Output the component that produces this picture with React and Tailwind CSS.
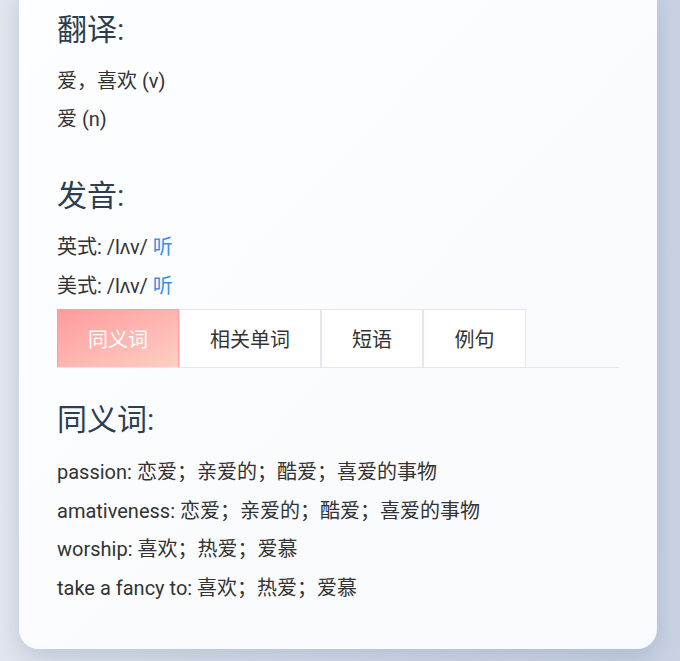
import React, { useState } from 'react';

const cn = '"Roboto", "Noto Sans CJK SC", sans-serif';

const tabs = [
  { id: 'syn', label: '同义词', w: 'w-[122px]' },
  { id: 'rel', label: '相关单词', w: 'w-[142px]' },
  { id: 'phr', label: '短语', w: 'w-[102px]' },
  { id: 'ex', label: '例句', w: 'w-[103px]' },
];

const synonyms = [
  ['passion', '恋爱；亲爱的；酷爱；喜爱的事物'],
  ['amativeness', '恋爱；亲爱的；酷爱；喜爱的事物'],
  ['worship', '喜欢；热爱；爱慕'],
  ['take a fancy to', '喜欢；热爱；爱慕'],
];

const App = () => {
  const [active, setActive] = useState('syn');

  return (
    <div
      className="min-h-screen overflow-hidden bg-linear-to-r from-[#e2e7ef] to-[#c9d3e3] pl-[19px] pr-[23px] pb-[13px]"
      style={{ fontFamily: cn }}
    >
      <div className="-mt-[20px] rounded-[20px] bg-linear-to-br from-[#fdfeff] to-[#f8f9fc] px-[38px] pt-[32px] pb-[42px] shadow-[0_10px_25px_rgba(90,110,150,0.25)]">
        {/* Translation */}
        <h2 className="text-[30px] leading-[36px] text-[#2c3e50]">翻译:</h2>
        <div className="mt-[14px] text-[20px] leading-[38px] text-[#333]">
          <p>爱，喜欢 (v)</p>
          <p>爱 (n)</p>
        </div>

        {/* Pronunciation */}
        <h2 className="mt-[40px] text-[30px] leading-[36px] text-[#2c3e50]">发音:</h2>
        <div className="mt-[14px] text-[20px] leading-[38.5px] text-[#333]">
          <p>
            英式: /lʌv/ <span className="cursor-pointer text-[#3a8ee6]">听</span>
          </p>
          <p>
            美式: /lʌv/ <span className="cursor-pointer text-[#3a8ee6]">听</span>
          </p>
        </div>

        {/* Tabs */}
        <div className="mt-[4px] flex border-b border-[#e4e7ed]">
          {tabs.map(t => (
            <button
              key={t.id}
              onClick={() => setActive(t.id)}
              className={`${t.w} h-[58px] border border-b-0 pt-[2px] text-[20px] ${
                active === t.id
                  ? 'border-[#ff9ea2] bg-linear-to-br from-[#ff9a9e] to-[#fbcfc3] text-white'
                  : 'border-[#e4e7ed] bg-white text-[#333]'
              }`}
            >
              {t.label}
            </button>
          ))}
        </div>

        {/* Synonyms */}
        <h2 className="mt-[34px] text-[30px] leading-[36px] text-[#2c3e50]">同义词:</h2>
        <div className="mt-[15px] text-[20px] leading-[38.5px] text-[#333]">
          {synonyms.map(([en, zh]) => (
            <p key={en}>
              {en}: {zh}
            </p>
          ))}
        </div>
      </div>
    </div>
  );
};

export default App;
